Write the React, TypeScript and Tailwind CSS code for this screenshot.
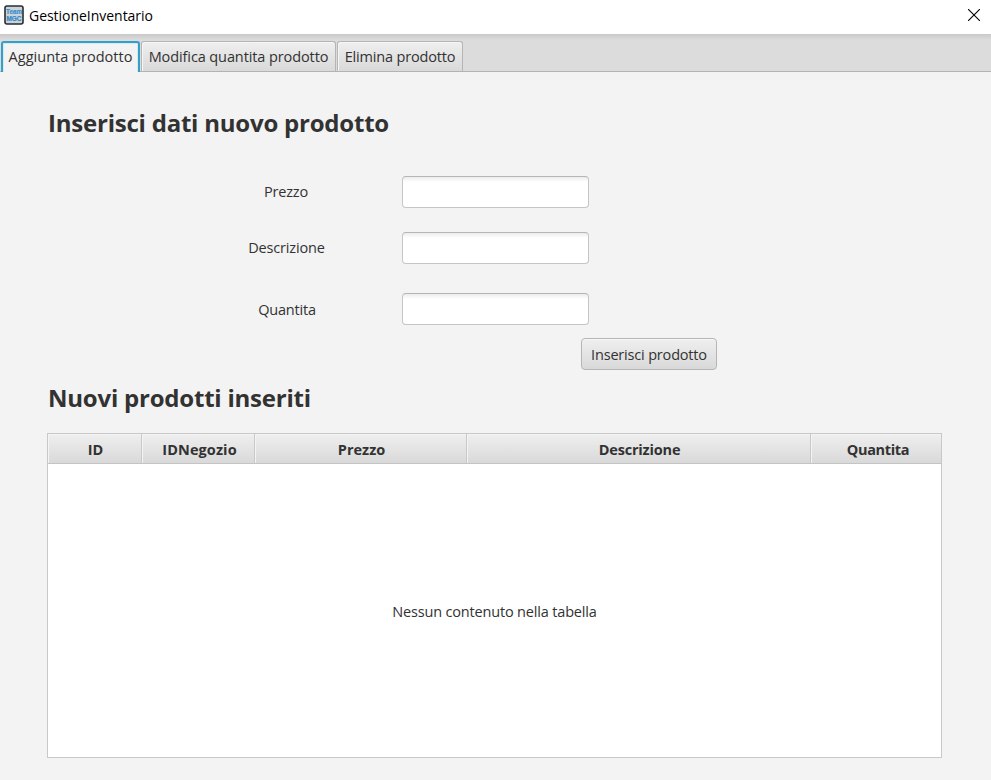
import React from "react";

const font = "font-['Open_Sans','Noto_Sans',sans-serif]";

const fields = [
  { label: "Prezzo", offset: "mt-[41px]", tracking: "tracking-[-0.2px]", shift: "pb-0" },
  { label: "Descrizione", offset: "mt-6", tracking: "tracking-[-0.16px]", shift: "pl-px" },
  { label: "Quantita", offset: "mt-[29px]", tracking: "tracking-[-0.2px]", shift: "pt-[2px] pl-[2px]" },
];

const columns = [
  { name: "ID", width: "w-[94px]", text: "pl-[2px]" },
  { name: "IDNegozio", width: "w-[113px]", text: "pl-[3px] tracking-[0.1px]" },
  { name: "Prezzo", width: "w-[212px]", text: "pl-[2px]" },
  { name: "Descrizione", width: "w-[344px]", text: "pl-[2px] tracking-[-0.18px]" },
  { name: "Quantita", width: "w-[130px]", text: "pl-[4px] tracking-[-0.35px]" },
];

function AppIcon() {
  return (
    <svg width="20" height="20" viewBox="0 0 20 20" className="shrink-0">
      <rect x="1" y="1" width="18" height="18" rx="2" fill="#cbd3d9" stroke="#2a2d31" strokeWidth="1.6" />
      <text x="10" y="9" textAnchor="middle" fontFamily="Liberation Sans, sans-serif" fontWeight="700" fontSize="6.6" textLength="16" lengthAdjust="spacingAndGlyphs" fill="#3a8fcb" stroke="#3a8fcb" strokeWidth="0.2">Team</text>
      <text x="10" y="16.3" textAnchor="middle" fontFamily="Liberation Sans, sans-serif" fontWeight="700" fontSize="7.4" textLength="15" lengthAdjust="spacingAndGlyphs" fill="#2b85c8" stroke="#2b85c8" strokeWidth="0.2">MGC</text>
    </svg>
  );
}

function Tab({ label, width, tracking }: { label: string; width: string; tracking: string }) {
  return (
    <div className={`${width} ${tracking} h-[30px] rounded-t-[3px] border border-b-0 border-[#b5b5b5] bg-linear-to-b from-[#efefef] to-[#d9d9d9] shadow-[inset_1px_1px_0_#f6f6f6] flex items-center justify-center whitespace-nowrap`}>
      {label}
    </div>
  );
}

export default function App() {
  return (
    <div className={`${font} flex h-[780px] w-[991px] flex-col overflow-hidden bg-[#f3f3f3] text-[14.5px] leading-5 text-[#323232]`}>
      <header className="flex h-[34px] shrink-0 items-start bg-white pl-1 pr-[11px]">
        <div className="pt-[5px]"><AppIcon /></div>
        <span className="ml-[5px] mt-[6px] text-[14px] tracking-[-0.03px] text-black">GestioneInventario</span>
        <svg width="12" height="12" viewBox="0 0 12 12" className="ml-auto mt-[9px]">
          <path d="M0 0 12 12M12 0 0 12" stroke="#000" strokeWidth="1.1" />
        </svg>
      </header>

      <nav className="flex h-[38px] shrink-0 items-end gap-px border-b border-[#b3b3b3] bg-[linear-gradient(#c9c9c9,#dcdcdc_6px,#dcdcdc)] pl-px">
        <div className="-mb-px flex h-[31px] w-[139px] items-center justify-center whitespace-nowrap rounded-t-[3px] border-2 border-b-0 border-[#359fc7] bg-[#f3f3f3] pb-px tracking-[0.02px] shadow-[inset_1px_1px_0_#d3eaf3,inset_-1px_0_0_#d3eaf3]">
          Aggiunta prodotto
        </div>
        <Tab label="Modifica quantita prodotto" width="w-[195px]" tracking="tracking-[-0.1px]" />
        <Tab label="Elimina prodotto" width="w-[126px]" tracking="tracking-[-0.17px]" />
      </nav>

      <main className="flex flex-col px-12">
        <h1 className="mt-[33px] h-[30px] whitespace-nowrap text-[24px] font-bold leading-[36px] tracking-[-0.22px]">Inserisci dati nuovo prodotto</h1>
        <form className="flex flex-col">
          {fields.map((f) => (
            <div key={f.label} className={`${f.offset} flex h-8 items-center`}>
              <label className={`${f.shift} ${f.tracking} ml-[178px] w-[120px] text-center`}>{f.label}</label>
              <input aria-label={f.label} className="ml-14 h-8 w-[187px] rounded-[4px] border border-[#c5c5c5] border-t-[#b5b5b5] bg-[linear-gradient(#ececec,#ffffff_5px)] outline-none" />
            </div>
          ))}
          <button type="button" className="ml-[533px] mt-[13px] h-8 w-[136px] whitespace-nowrap rounded-[4px] border border-[#b5b5b5] bg-linear-to-b from-[#efefef] to-[#d9d9d9] pt-[2px] tracking-[-0.18px] shadow-[inset_0_1px_0_#f7f7f7]">
            Inserisci prodotto
          </button>
        </form>
        <h2 className="mt-[10px] h-[36px] whitespace-nowrap text-[24px] font-bold leading-[36px] tracking-[-0.22px]">Nuovi prodotti inseriti</h2>
        <section className="-ml-px mt-[17px] flex h-[325px] w-[895px] flex-col border border-[#c8c8c8] bg-white">
          <div className="flex h-[30px] shrink-0 border-b border-[#c4c4c4] bg-linear-to-b from-[#efefef] to-[#d9d9d9]">
            {columns.map((c) => (
              <div key={c.name} className={`${c.width} ${c.text} flex items-center justify-center border-r border-[#c8c8c8] pt-[3px] font-bold shadow-[inset_1px_1px_0_#f4f4f4] last:border-r-0`}>
                {c.name}
              </div>
            ))}
          </div>
          <div className="flex flex-1 items-center justify-center pt-[2px] tracking-[-0.17px]">Nessun contenuto nella tabella</div>
        </section>
      </main>
    </div>
  );
}
